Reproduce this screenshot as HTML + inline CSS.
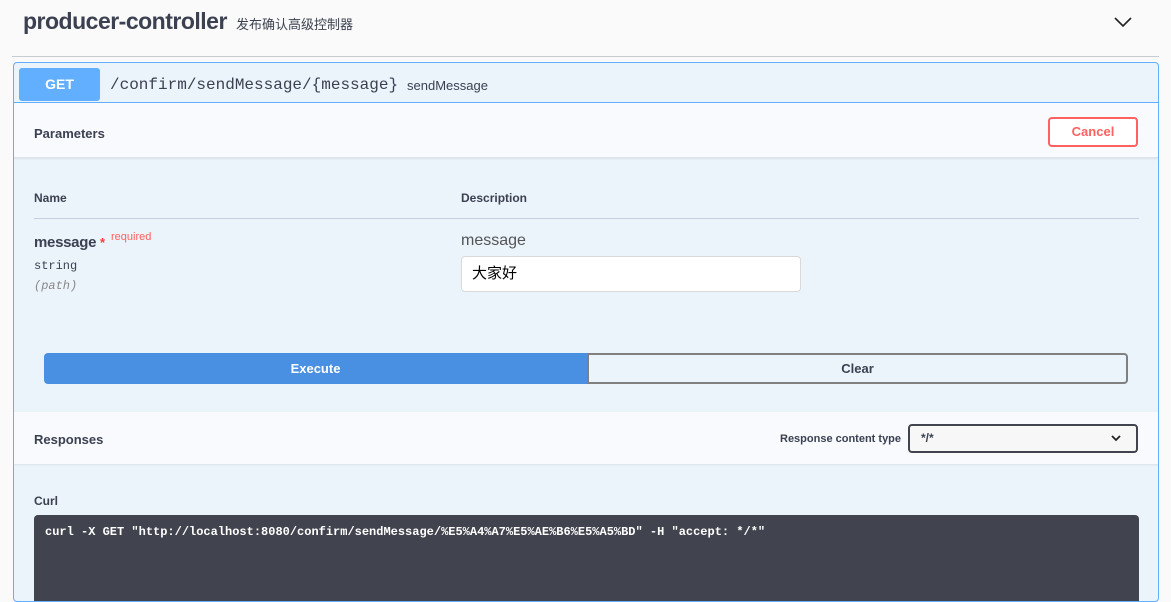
<!DOCTYPE html>
<html><head><meta charset="utf-8"><style>
*{box-sizing:border-box;margin:0;padding:0}
body{width:1171px;height:565px;overflow:hidden;background:#fafafa;font-family:"Liberation Sans","Noto Sans CJK SC",sans-serif;color:#3b4151;position:relative}
.a{position:absolute}
.mono{font-family:"Liberation Mono","Noto Sans CJK SC",monospace}
</style></head><body>
<div class="a" style="left:23px;top:8px;font-size:23px;font-weight:bold;letter-spacing:-0.5px">producer-controller</div>
<div class="a" style="left:236px;top:14px;font-size:13px">发布确认高级控制器</div>
<svg class="a" style="left:1113px;top:15px" width="20" height="14" viewBox="0 0 20 14"><path d="M2 3 L10 11 L18 3" fill="none" stroke="#222" stroke-width="1.6"/></svg>
<div class="a" style="left:12px;top:56px;width:1147px;height:1px;background:#c8cbd0"></div>

<div class="a" style="left:13px;top:62px;width:1146px;height:540px;border:1px solid #61affe;border-radius:4px;background:#ebf3fb;overflow:hidden">
  <div class="a" style="left:0;top:0;width:1146px;height:40px;border-bottom:1px solid #61affe"></div>
  <div class="a" style="left:5px;top:5px;width:81px;height:33px;background:#61affe;border-radius:3px;color:#fff;font-weight:bold;font-size:14px;text-align:center;line-height:33px">GET</div>
  <div class="a mono" style="left:96px;top:13px;font-size:16px">/confirm/sendMessage/{message}</div>
  <div class="a" style="left:393px;top:15px;font-size:13px">sendMessage</div>

  <div class="a" style="left:0;top:40px;width:1146px;height:55px;background:#f8fafd;border-bottom:1px solid #dde3ea;box-shadow:0 1px 2px rgba(0,0,0,.08)"></div>
  <div class="a" style="left:20px;top:63px;font-size:13px;font-weight:bold">Parameters</div>
  <div class="a" style="left:1034px;top:54px;width:90px;height:30px;border:2px solid #ff6060;border-radius:4px;color:#ff6060;font-weight:bold;font-size:13px;text-align:center;line-height:26px;background:#fff">Cancel</div>

  <div class="a" style="left:20px;top:128px;font-size:12px;font-weight:bold">Name</div>
  <div class="a" style="left:447px;top:128px;font-size:12px;font-weight:bold">Description</div>
  <div class="a" style="left:20px;top:155px;width:1105px;height:1px;background:#c6cfdd"></div>
  <div class="a" style="left:20px;top:171px;font-size:15px;font-weight:bold;letter-spacing:-0.3px">message <span style="color:#ff3b3b;font-size:13px">*</span></div>
  <div class="a" style="left:97px;top:168px;font-size:11px;color:#ff6060">required</div>
  <div class="a mono" style="left:20px;top:196px;font-size:12px">string</div>
  <div class="a mono" style="left:20px;top:216px;font-size:12px;font-style:italic;color:#888">(path)</div>
  <div class="a" style="left:447px;top:169px;font-size:16px;color:#555">message</div>
  <div class="a" style="left:447px;top:193px;width:340px;height:36px;background:#fff;border:1px solid #d9d9d9;border-radius:4px;padding-left:10px;line-height:34px;font-size:15px;color:#000">大家好</div>

  <div class="a" style="left:30px;top:290px;width:543px;height:31px;background:#4990e2;border-radius:4px 0 0 4px;color:#fff;font-weight:bold;font-size:13px;text-align:center;line-height:31px">Execute</div>
  <div class="a" style="left:573px;top:290px;width:541px;height:31px;border:2px solid #808080;border-radius:0 4px 4px 0;font-weight:bold;font-size:13px;text-align:center;line-height:27px">Clear</div>

  <div class="a" style="left:0;top:349px;width:1146px;height:52px;background:#f8fafd;box-shadow:0 1px 2px rgba(0,0,0,.08)"></div>
  <div class="a" style="left:20px;top:369px;font-size:13px;font-weight:bold">Responses</div>
  <div class="a" style="left:766px;top:370px;font-size:11px;font-weight:bold">Response content type</div>
  <div class="a" style="left:894px;top:361px;width:230px;height:29px;border:2px solid #41444e;border-radius:4px;background:#f7f7f7;font-size:12px;font-weight:bold;padding-left:11px;line-height:24px">*/*</div>
  <svg class="a" style="left:1096px;top:370px" width="12" height="10" viewBox="0 0 12 10"><path d="M2 3 L6 7 L10 3" fill="none" stroke="#222" stroke-width="1.8"/></svg>

  <div class="a" style="left:20px;top:431px;font-size:12px;font-weight:bold">Curl</div>
  <div class="a mono" style="left:20px;top:452px;width:1105px;height:90px;background:#41444e;border-radius:4px;color:#fff;font-size:12px;font-weight:bold;padding:10px 11px">curl -X GET "http://localhost:8080/confirm/sendMessage/%E5%A4%A7%E5%AE%B6%E5%A5%BD" -H "accept: */*"</div>
</div>
</body></html>
